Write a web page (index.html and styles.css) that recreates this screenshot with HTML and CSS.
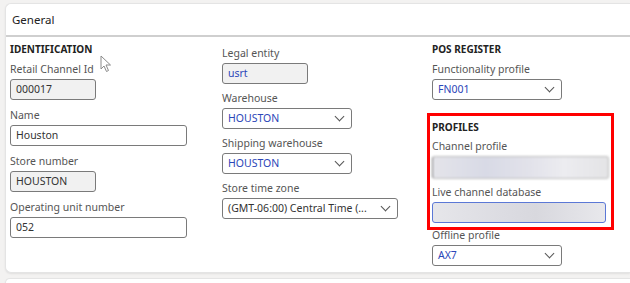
FILE: index.html
```html
<!DOCTYPE html>
<html lang="en">
<head>
    <meta charset="UTF-8">
    <meta name="viewport" content="width=device-width, initial-scale=1.0">
    <title>Store - General</title>
    <link rel="stylesheet" href="styles.css">
</head>
<body>
    <div class="card">
        <div class="card-header">General</div>

        <div class="card-body">
            <div class="column col-first">
                <div class="group-title">IDENTIFICATION</div>
                <div class="field">
                    <label>Retail Channel Id</label>
                    <div class="input short readonly">000017</div>
                </div>
                <div class="field">
                    <label>Name</label>
                    <div class="input wide">Houston</div>
                </div>
                <div class="field">
                    <label>Store number</label>
                    <div class="input short readonly">HOUSTON</div>
                </div>
                <div class="field">
                    <label>Operating unit number</label>
                    <div class="input wide">052</div>
                </div>
            </div>

            <div class="column col-mid">
                <div class="field">
                    <label>Legal entity</label>
                    <div class="input short readonly link">usrt</div>
                </div>
                <div class="field">
                    <label>Warehouse</label>
                    <div class="input select link">HOUSTON</div>
                </div>
                <div class="field">
                    <label>Shipping warehouse</label>
                    <div class="input select link">HOUSTON</div>
                </div>
                <div class="field">
                    <label>Store time zone</label>
                    <div class="input select xwide">(GMT-06:00) Central Time (...</div>
                </div>
            </div>

            <div class="column">
                <div class="group-title">POS REGISTER</div>
                <div class="field">
                    <label>Functionality profile</label>
                    <div class="input select link">FN001</div>
                </div>

                <div class="highlight">
                    <div class="group-title">PROFILES</div>
                    <div class="field">
                        <label>Channel profile</label>
                        <div class="input blurred"></div>
                    </div>
                    <div class="field">
                        <label>Live channel database</label>
                        <div class="input blurred focused"></div>
                    </div>
                </div>

                <div class="field">
                    <label>Offline profile</label>
                    <div class="input select link">AX7</div>
                </div>
            </div>
        </div>
    </div>
    <div class="card next"></div>

    <svg class="cursor" width="12" height="18" viewBox="0 0 12 18">
        <path d="M1 1 L1 14 L4 11 L6.5 16.5 L8.5 15.5 L6 10 L10.5 10 Z" fill="#fff" stroke="#8a8a8a" stroke-width="1"/>
    </svg>
</body>
</html>
```

FILE: styles.css
```css
* { margin: 0; padding: 0; box-sizing: border-box; }
html { overflow: hidden; }
body {
    font-family: "Noto Sans", "Open Sans", sans-serif;
    font-size: 10.5px;
    color: #444;
    background: #f3f2f1;
    padding: 3px 0 0 5px;
    height: 283px;
    overflow: hidden;
    position: relative;
}
.card {
    background: #fff;
    border: 1px solid #e4e4e4;
    border-right: none;
    border-radius: 6px 0 0 6px;
    box-shadow: 0 1px 2px rgba(0,0,0,0.08);
    height: 270px;
}
.card.next {
    margin-top: 5px;
    height: 5px;
    border-bottom: none;
    border-radius: 6px 0 0 0;
}
.card-header {
    height: 33px;
    padding: 8px 0 0 6px;
    font-size: 11.5px;
    color: #222;
    border-bottom: 2px solid #cfcfcf;
}
.card-body {
    display: grid;
    grid-template-columns: 212px 210px 1fr;
    padding: 5px 0 0 4px;
}
.column {
    display: flex;
    flex-direction: column;
    gap: 7px;
}
.col-first {
    gap: 8px;
}
.col-mid {
    padding-top: 4px;
}
.group-title {
    font-weight: 700;
    font-size: 10px;
    color: #222;
    line-height: 14px;
    margin-bottom: -1px;
}
.col-first .group-title {
    margin-bottom: -2px;
}
.field {
    display: flex;
    flex-direction: column;
    gap: 3px;
}
label {
    line-height: 14px;
    color: #555;
}
.input {
    height: 21px;
    border: 1px solid #7a7a7a;
    border-radius: 3px;
    padding: 0 5px;
    line-height: 19px;
    color: #333;
    background: #fff;
    white-space: nowrap;
    overflow: hidden;
    position: relative;
}
.short { width: 86px; }
.wide { width: 177px; }
.readonly { background: #f1f1f1; }
.link { color: #2c46b8; }
.select {
    width: 130px;
    padding-right: 22px;
}
.select.xwide {
    width: 176px;
    color: #333;
}
.select::after {
    content: "";
    position: absolute;
    right: 8px;
    top: 4px;
    width: 6px;
    height: 6px;
    border-right: 1px solid #555;
    border-bottom: 1px solid #555;
    transform: rotate(45deg);
}
.highlight {
    border: 3px solid #f00;
    margin: 6px 16px -9px -5px;
    padding: 4px 2px 4px 2px;
    display: flex;
    flex-direction: column;
    gap: 6px;
}
.blurred {
    width: 177px;
    height: 23px;
    border-color: #bbb;
    border-left-color: #777;
    background: linear-gradient(90deg, #e4e4ea 0%, #d8dae6 30%, #e2e2ea 55%, #ececf0 75%, #e4e4e6 100%);
    filter: blur(1px);
}
.blurred.focused {
    width: 174px;
    height: 21px;
    border: 1px solid #5b78d6;
    filter: none;
    background: linear-gradient(90deg, #e6e6ea 0%, #dcdce2 40%, #d8d8de 60%, #e8e8ec 100%);
}
.cursor {
    position: absolute;
    left: 100px;
    top: 55px;
}
```
